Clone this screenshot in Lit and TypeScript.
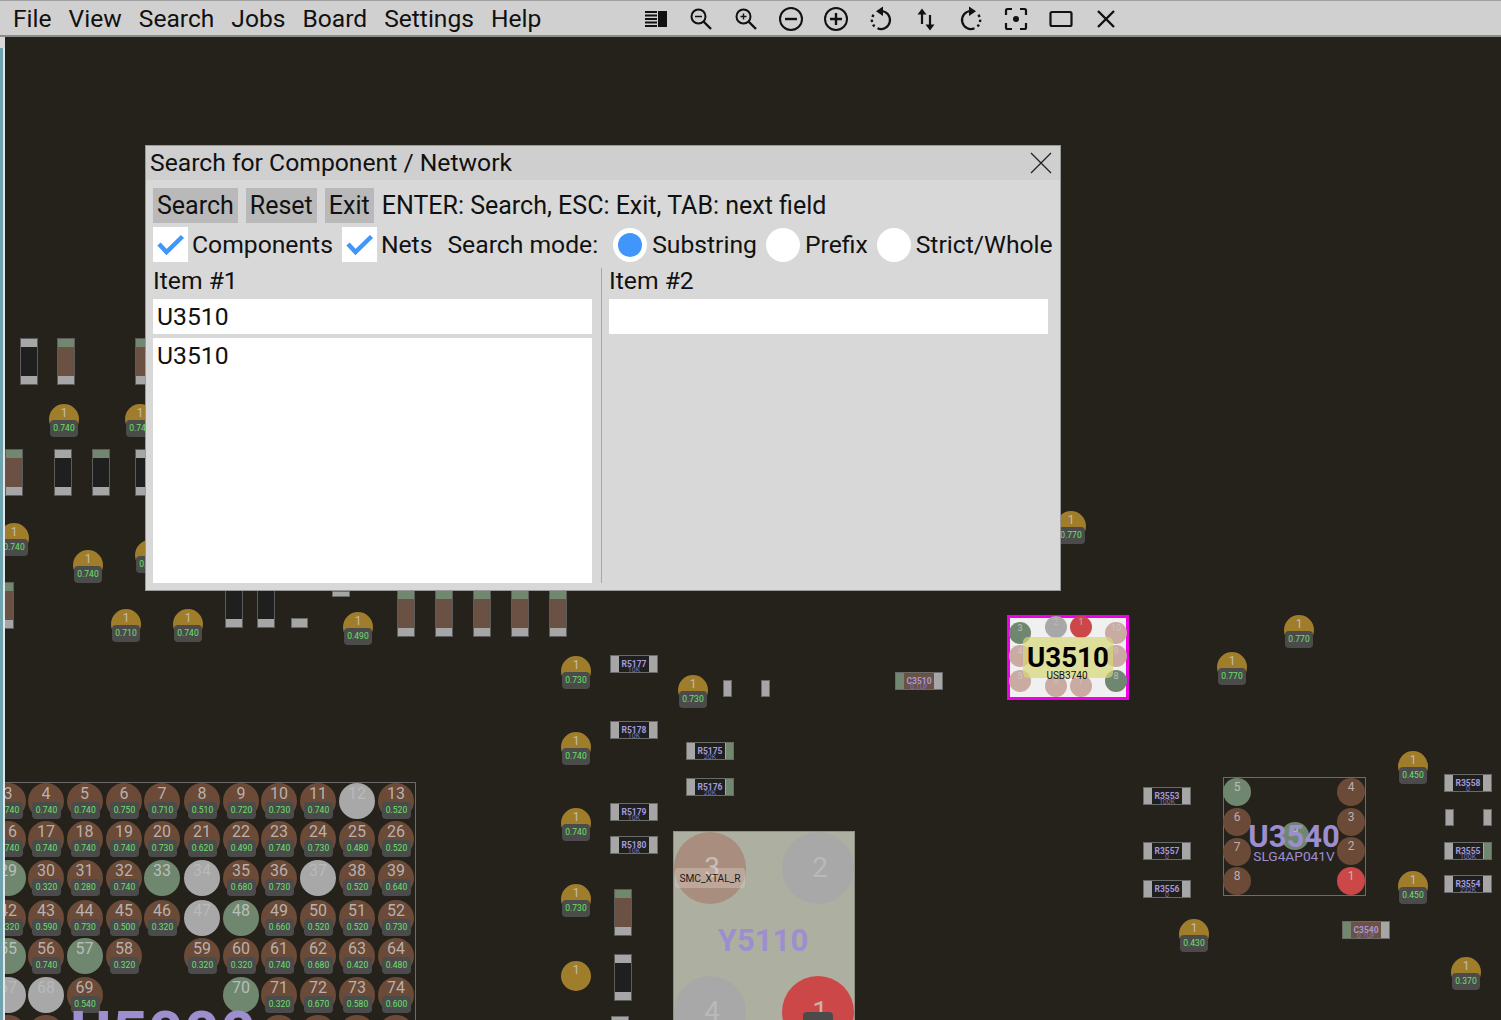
import { LitElement, html, css, svg } from "lit";
import { customElement } from "lit/decorators.js";

const OFFSET_Y = 37; // board starts under the toolbar, data is in page coords

type Tone = "brown" | "green" | "grey" | "red" | "pink" | "tan";

// x, y of the value label, value
const testPoints: [number, number, string][] = [
  [64, 428, "0.740"], [140, 428, "0.740"], [14, 547, "0.740"], [88, 574, "0.740"],
  [150, 564, "0.740"], [126, 633, "0.710"], [188, 633, "0.740"], [358, 636, "0.490"],
  [576, 680, "0.730"], [693, 699, "0.730"], [576, 756, "0.740"], [576, 832, "0.740"],
  [576, 908, "0.730"], [576, 985, ""], [1071, 535, "0.770"], [1299, 639, "0.770"],
  [1232, 676, "0.770"], [1413, 775, "0.450"], [1413, 895, "0.450"], [1194, 943, "0.430"],
  [1466, 981, "0.370"],
];

// x, y, body colour, green cap on top
const vertical: [number, number, "dark" | "brown", boolean][] = [
  [20, 338, "dark", false], [57, 338, "brown", true], [135, 338, "brown", true],
  [5, 449, "brown", true], [54, 449, "dark", false], [92, 449, "dark", true], [135, 449, "dark", false],
  [-4, 582, "brown", true], [225, 581, "dark", false], [257, 581, "dark", false],
  [397, 590, "brown", true], [435, 590, "brown", true], [473, 590, "brown", true],
  [511, 590, "brown", true], [549, 590, "brown", true],
  [614, 889, "brown", true], [614, 954, "dark", false],
];

// x, y, name, value, which cap is green, body colour
const horizontal: [number, number, string, string, "" | "left" | "right", "dark" | "brown"][] = [
  [610, 655, "R5177", "10K", "", "dark"], [610, 721, "R5178", "10K", "", "dark"],
  [610, 803, "R5179", "10K", "", "dark"], [610, 836, "R5180", "10K", "", "dark"],
  [686, 742, "R5175", "20K", "right", "dark"], [686, 778, "R5176", "20K", "right", "dark"],
  [1143, 787, "R3553", "100K", "", "dark"], [1143, 842, "R3557", "0", "", "dark"],
  [1143, 880, "R3556", "0", "", "dark"], [1444, 774, "R3558", "0", "", "dark"],
  [1444, 842, "R3555", "100K", "right", "dark"], [1444, 875, "R3554", "232K", "", "dark"],
  [1342, 921, "C3540", "0.1UF", "left", "brown"], [895, 672, "C3510", "0.1UF", "left", "brown"],
];

// x, y, w, h
const pads: [number, number, number, number][] = [
  [723, 680, 9, 17], [761, 680, 9, 17], [1445, 809, 9, 17], [1483, 809, 9, 17],
  [291, 618, 17, 10], [332, 591, 18, 6], [611, 1016, 18, 6],
];

const bgaCols = [8, 46, 84.5, 124, 162, 202, 241, 279, 318, 357, 396];
const bgaRows = [801, 839, 878, 918, 956, 995, 1033];
// number, value; "g" green, "w" grey, null no pin
const bgaPins: ([number, string] | null)[][] = [
  [[3, ".740"], [4, ".740"], [5, ".740"], [6, ".750"], [7, ".710"], [8, ".510"], [9, ".720"], [10, ".730"], [11, ".740"], [12, "w"], [13, ".520"]],
  [[16, ".740"], [17, ".740"], [18, ".740"], [19, ".740"], [20, ".730"], [21, ".620"], [22, ".490"], [23, ".740"], [24, ".730"], [25, ".480"], [26, ".520"]],
  [[29, "g"], [30, ".320"], [31, ".280"], [32, ".740"], [33, "g"], [34, "w"], [35, ".680"], [36, ".730"], [37, "w"], [38, ".520"], [39, ".640"]],
  [[42, ".320"], [43, ".590"], [44, ".730"], [45, ".500"], [46, ".320"], [47, "w"], [48, "g"], [49, ".660"], [50, ".520"], [51, ".520"], [52, ".730"]],
  [[55, "g"], [56, ".740"], [57, "g"], [58, ".320"], null, [59, ".320"], [60, ".320"], [61, ".740"], [62, ".680"], [63, ".420"], [64, ".480"]],
  [[67, "w"], [68, "w"], [69, ".540"], null, null, null, [70, "g"], [71, ".320"], [72, ".670"], [73, ".580"], [74, ".600"]],
  // only the top of this row is on screen
  [[0, ""], [0, ""], null, null, null, null, null, [0, ""], [0, ""], [0, ""], [0, ""]],
];

const menus = ["File", "View", "Search", "Jobs", "Board", "Settings", "Help"];

const s = (paths: unknown) => html`<svg viewBox="0 0 24 24" width="24" height="24" fill="none" stroke="#111" stroke-width="2">${paths}</svg>`;

const toolIcons = [
  s(svg`<path d="M1 5h12M1 8.500h12M1 12h12M1 15.500h12M1 19h12" stroke-width="2"/><rect x="14" y="4" width="9" height="16" fill="#111" stroke="none"/>`),
  s(svg`<circle cx="9.500" cy="9.500" r="7"/><path d="M14.500 14.500l7.500 7.500" stroke-width="2.400"/><path d="M6 9.500h7" stroke-width="1.500"/>`),
  s(svg`<circle cx="9.500" cy="9.500" r="7"/><path d="M14.500 14.500l7.500 7.500" stroke-width="2.400"/><path d="M6.500 9.500h6M9.500 6.500v6" stroke-width="1.400"/>`),
  s(svg`<circle cx="12" cy="12" r="11"/><path d="M6 12h12" stroke-width="2.400"/>`),
  s(svg`<circle cx="12" cy="12" r="11"/><path d="M6 12h12M12 6v12" stroke-width="2.400"/>`),
  s(svg`<path d="M12 4A9 9 0 1 1 8.500 21.300" stroke-width="2.200"/><path d="M5.500 19.500A9 9 0 0 1 6 6.300" stroke-width="2.400" stroke-dasharray="2.400 2.700"/><path d="M14 -0.500L7 4.300 14 9z" fill="#111" stroke="none"/>`),
  s(svg`<path d="M8 4v13M16 8v13" stroke-width="2.200"/><path d="M3.500 7.500L8 1.500l4.500 6zM11.500 17.500h9L16 23.500z" fill="#111" stroke="none"/>`),
  s(svg`<path d="M12 4A9 9 0 1 0 15.500 21.300" stroke-width="2.200"/><path d="M18.500 19.500A9 9 0 0 0 18 6.300" stroke-width="2.400" stroke-dasharray="2.400 2.700"/><path d="M10 -0.500L17 4.300 10 9z" fill="#111" stroke="none"/>`),
  s(svg`<path d="M2 8V3.500A1.500 1.500 0 0 1 3.500 2H8M16 2h4.500A1.500 1.500 0 0 1 22 3.500V8M22 16v4.500a1.500 1.500 0 0 1-1.500 1.500H16M8 22H3.500A1.500 1.500 0 0 1 2 20.500V16" stroke-width="2.200"/><circle cx="12" cy="12" r="3" fill="#111" stroke="none"/>`),
  s(svg`<rect x="1.500" y="5" width="21" height="14" rx="1.500" stroke-width="2.200"/>`),
  s(svg`<path d="M4 4l16 16M20 4L4 20" stroke-width="2.400"/>`),
];

@customElement("app-root")
export class AppRoot extends LitElement {
  static styles = css`
    :host {
      display: flex;
      flex-direction: column;
      width: 1501px;
      height: 1020px;
      overflow: hidden;
      font-family: Roboto, "Liberation Sans", sans-serif;
      color: #111;
    }

    .toolbar {
      flex: none;
      box-sizing: border-box;
      height: 37px;
      display: flex;
      align-items: center;
      background: #d0d0d0;
      border-top: 1px solid #a0a0a0;
      border-bottom: 2px solid #8c8c8c;
      padding-left: 13px;
    }
    .menus {
      display: flex;
      gap: 17px;
      font-size: 24.600px;
      width: 631px;
    }
    .tools {
      display: flex;
      gap: 21px;
      padding-top: 2px;
    }
    .tools svg {
      display: block;
      overflow: visible;
    }

    .board {
      position: relative;
      flex: 1;
      background: #25221c;
      overflow: hidden;
    }
    .edge {
      position: absolute;
      left: 0;
      top: 11px;
      bottom: 0;
      width: 3px;
      background: #6fa3ad;
      border-right: 2px solid #e2e6e6;
      z-index: 5;
    }
    .edge-top {
      position: absolute;
      left: 0;
      top: 0;
      height: 11px;
      width: 5px;
      background: #d8d8d8;
      z-index: 5;
    }

    /* testpoints */
    .tp {
      position: absolute;
      width: 30px;
      height: 30px;
      margin-left: -15px;
      border-radius: 50%;
      background: #a07d2a;
    }
    .pin-no {
      position: absolute;
      left: 0;
      right: 0;
      text-align: center;
      color: rgba(205, 205, 205, 0.8);
      line-height: 1;
    }
    .tp .pin-no {
      top: 3px;
      font-size: 12px;
    }
    .val {
      position: absolute;
      box-sizing: border-box;
      width: 28px;
      height: 17px;
      border-radius: 4px;
      background: #4b4b4b;
      color: #6be06b;
      font-size: 8.500px;
      line-height: 17px;
      text-align: center;
    }
    .tp .val {
      left: 1px;
      top: 16px;
    }

    /* two pad parts */
    .chip-v,
    .chip-h {
      position: absolute;
      box-sizing: border-box;
      display: flex;
      border: 1px solid #6a6a6a;
      background: #a6a6a6;
    }
    .chip-v {
      width: 18px;
      height: 47px;
      flex-direction: column;
      justify-content: space-between;
      border-color: #5c5c5c;
    }
    .chip-v .body {
      height: 30px;
      margin-top: 8px;
      margin-bottom: 8px;
    }
    .chip-v.top-green {
      background: linear-gradient(#71876f 0 9px, #a6a6a6 9px);
    }
    .chip-h {
      width: 48px;
      height: 18px;
      justify-content: center;
    }
    .chip-h.right {
      background: linear-gradient(90deg, #a6a6a6 0 39px, #71876f 39px);
    }
    .chip-h.left {
      background: linear-gradient(90deg, #71876f 0 9px, #a6a6a6 9px);
    }
    .body.dark {
      background: #1f1f1f;
    }
    .body.brown {
      background: #6b5044;
    }
    .chip-h .body {
      position: relative;
      width: 30px;
      overflow: hidden;
      text-align: center;
    }
    .chip-h .name {
      position: relative;
      z-index: 1;
      display: block;
      color: #a79ad8;
      font-size: 8.500px;
      font-weight: 700;
      line-height: 10px;
      margin-top: 3px;
    }
    .chip-h .rv {
      display: block;
      color: #8175b0;
      font-size: 7px;
      line-height: 8px;
      margin-top: -3px;
    }
    .pad {
      position: absolute;
      background: #a6a6a6;
      border: 1px solid #6a6a6a;
      box-sizing: border-box;
    }

    /* packages */
    .pkg {
      position: absolute;
      box-sizing: border-box;
    }
    .pkg-bga {
      left: -20px;
      width: 436px;
      height: 300px;
      border: 1px solid #6b6b6b;
    }
    .pkg-u3540 {
      width: 143px;
      height: 119px;
      border: 1px solid #6b6b6b;
    }
    .pkg-u3510 {
      width: 122px;
      height: 85px;
      border: 3px solid #f000e8;
      background: #f0f0f0;
    }
    .pkg-y5110 {
      width: 182px;
      height: 230px;
      border: 1px solid #8f8f85;
      background: #adb0a0;
    }
    .pkg-y5110 .pin-no {
      left: 4px;
    }

    .pin {
      position: absolute;
      border-radius: 50%;
    }
    .pin.brown {
      background: #6b4a38;
    }
    .pin.green {
      background: #70876f;
    }
    .pin.grey {
      background: #a8a8a8;
    }
    .pin.red {
      background: #cc4848;
    }
    .pin.pink {
      background: #c9aba2;
    }
    .pin.tan {
      background: #a98d7e;
    }
    .pin.grey .pin-no {
      color: #b9b9b9;
    }
    .pin .val {
      left: 4px;
      top: 19px;
      width: 29px;
    }

    .pkg-label {
      position: absolute;
      white-space: nowrap;
      transform: translate(-50%, -50%);
      color: #9d8fcf;
      line-height: 1;
      text-align: center;
    }
    .bold {
      font-weight: 700;
    }

    .highlight {
      position: absolute;
      left: 1023px;
      top: 600px;
      width: 90px;
      height: 41px;
      border-radius: 5px;
      background: rgba(215, 215, 120, 0.7);
    }
    .xtal-tag {
      position: absolute;
      left: 675px;
      top: 831px;
      width: 70px;
      height: 20px;
      border-radius: 3px;
      background: rgba(225, 215, 205, 0.35);
      color: #1c1c1c;
      font-size: 10.200px;
      line-height: 22px;
      text-align: center;
    }

    /* dialog */
    .dialog {
      position: absolute;
      left: 145px;
      top: 108px;
      z-index: 10;
      box-sizing: border-box;
      width: 916px;
      height: 446px;
      display: flex;
      flex-direction: column;
      background: #d8d8d8;
      border: 1px solid #9a9a9a;
      font-size: 24.700px;
    }
    .title {
      flex: none;
      box-sizing: border-box;
      height: 34px;
      display: flex;
      align-items: center;
      justify-content: space-between;
      padding: 0 8px 0 4px;
      background: #cfcfcf;
    }
    .title > span {
      padding-bottom: 2px;
    }
    .content {
      flex: 1;
      display: flex;
      flex-direction: column;
      padding: 8px 12px 7px 7px;
      min-height: 0;
    }
    .actions,
    .options {
      display: flex;
      align-items: center;
      height: 35px;
      white-space: nowrap;
    }
    .actions {
      font-size: 25px;
    }
    .options {
      margin-top: 4px;
    }
    button {
      font: inherit;
      color: inherit;
      height: 35px;
      border: 0;
      padding: 0 4px;
      margin-right: 8px;
      background: #b9b9b9;
    }
    .tick {
      width: 35px;
      height: 35px;
      flex: none;
      background: #fff;
      margin-right: 4px;
    }
    .tick svg {
      display: block;
    }
    .gap-comp {
      margin-right: 9px;
    }
    .gap-nets {
      margin-right: 15px;
    }
    .gap-mode {
      margin-right: 15px;
    }
    .radio {
      flex: none;
      box-sizing: border-box;
      width: 34px;
      height: 34px;
      border-radius: 50%;
      background: #fff;
      margin-right: 5px;
      display: flex;
      align-items: center;
      justify-content: center;
    }
    .radio.on::after {
      content: "";
      width: 24px;
      height: 24px;
      border-radius: 50%;
      background: #4096fb;
    }
    .gap-radio {
      margin-right: 9px;
    }
    .items {
      flex: 1;
      min-height: 0;
      margin-top: 6px;
      display: grid;
      grid-template-columns: 439px 439px;
      column-gap: 17px;
      position: relative;
    }
    .items::before {
      content: "";
      position: absolute;
      left: 448px;
      top: 0;
      bottom: 0;
      width: 1px;
      background: #a8a8a8;
    }
    .col {
      display: flex;
      flex-direction: column;
      min-height: 0;
    }
    .col-head {
      height: 31px;
      line-height: 26px;
    }
    .field {
      height: 35px;
      line-height: 35px;
      background: #fff;
      padding-left: 4px;
      box-sizing: border-box;
    }
    .results {
      flex: 1;
      margin-top: 4px;
      background: #fff;
      padding-left: 4px;
      line-height: 36px;
    }
  `;

  private pos(x: number, y: number) {
    return `left:${x}px;top:${y - OFFSET_Y}px`;
  }

  private pin(tone: Tone, cx: number, cy: number, r: number, no: string | number, fs: number, noTop: number, value = "") {
    return html`<div
      class="pin ${tone}"
      style="left:${cx - r}px;top:${cy - r}px;width:${r * 2}px;height:${r * 2}px"
    >
      ${no ? html`<span class="pin-no" style="top:${noTop}px;font-size:${fs}px">${no}</span>` : ""}
      ${value ? html`<span class="val">${value}</span>` : ""}
    </div>`;
  }

  private renderBga() {
    // the package has a 1px border, children are placed from inside it
    return bgaPins.map((row, ri) =>
      row.map((p, ci) => {
        if (!p) return "";
        const [no, kind] = p;
        const tone: Tone = kind === "g" ? "green" : kind === "w" ? "grey" : "brown";
        const value = kind.startsWith(".") ? "0" + kind : "";
        return this.pin(tone, bgaCols[ci] + 19, bgaRows[ri] - 783, 18, no, 16, 3, value);
      })
    );
  }

  private renderU3540() {
    const pins: [Tone, number, number, string][] = [
      ["green", 13, 14, "5"], ["brown", 13, 44, "6"], ["brown", 13, 74, "7"], ["brown", 13, 103, "8"],
      ["brown", 127, 14, "4"], ["brown", 127, 44, "3"], ["brown", 127, 73, "2"], ["red", 127, 103, "1"],
      ["green", 71, 58, "9"],
    ];
    return pins.map(([t, x, y, n]) => this.pin(t, x, y, 14, n, 12, 3));
  }

  private renderU3510() {
    const pins: [Tone, number, number, string][] = [
      ["green", 10, 15, "3"], ["grey", 46, 9, "2"], ["red", 71, 9, "1"], ["pink", 106, 15, "10"],
      ["pink", 10, 38, "4"], ["pink", 106, 38, "9"], ["pink", 10, 63, "5"], ["pink", 46, 68, "6"],
      ["pink", 71, 68, "7"], ["green", 106, 63, "8"],
    ];
    return pins.map(([t, x, y, n]) => this.pin(t, x, y, 11, n, 9, 2));
  }

  private renderY5110() {
    return html`
      ${this.pin("tan", 36, 36, 36, "3", 28, 22)}
      ${this.pin("grey", 144, 36, 36, "2", 28, 22)}
      ${this.pin("grey", 36, 180, 36, "4", 28, 22)}
      ${this.pin("red", 144, 180, 36, "1", 28, 22)}
      <div class="val" style="left:129px;top:180px;width:30px;height:40px"></div>
    `;
  }

  render() {
    return html`
      <div class="toolbar">
        <div class="menus">${menus.map((m) => html`<span>${m}</span>`)}</div>
        <div class="tools">${toolIcons}</div>
      </div>
      <div class="board">
        <div class="edge-top"></div>
        <div class="edge"></div>
        ${testPoints.map(
          ([x, y, v]) => html`<div class="tp" style=${this.pos(x, y - 24)}>
            <span class="pin-no">1</span>
            ${v ? html`<span class="val">${v}</span>` : ""}
          </div>`
        )}
        ${vertical.map(
          ([x, y, b, g]) => html`<div class="chip-v ${g ? "top-green" : ""}" style=${this.pos(x, y)}>
            <div class="body ${b}"></div>
          </div>`
        )}
        ${horizontal.map(
          ([x, y, n, v, cap, b]) => html`<div class="chip-h ${cap}" style=${this.pos(x, y)}>
            <div class="body ${b}"><span class="name">${n}</span><span class="rv">${v}</span></div>
          </div>`
        )}
        ${pads.map(
          ([x, y, w, h]) => html`<div class="pad" style="${this.pos(x, y)};width:${w}px;height:${h}px"></div>`
        )}

        <div class="pkg pkg-bga" style="top:${782 - OFFSET_Y}px">${this.renderBga()}</div>
        <div class="pkg-label bold" style="${this.pos(163, 1034)};font-size:63px">U5000</div>

        <div class="pkg pkg-u3540" style=${this.pos(1223, 777)}>${this.renderU3540()}</div>
        <div class="pkg-label bold" style="${this.pos(1294, 836)};font-size:31px">U3540</div>
        <div class="pkg-label" style="${this.pos(1294, 857)};font-size:13.700px">SLG4AP041V</div>

        <div class="pkg pkg-u3510" style=${this.pos(1007, 615)}>
          ${this.renderU3510()}
        </div>
        <div class="highlight"></div>
        <div class="pkg-label bold" style="${this.pos(1068, 658)};font-size:27.700px;color:#000">U3510</div>
        <div class="pkg-label" style="${this.pos(1067, 676)};font-size:10px;color:#111">USB3740</div>

        <div class="pkg pkg-y5110" style=${this.pos(673, 831)}>${this.renderY5110()}</div>
        <div class="pkg-label bold" style="${this.pos(763, 940)};font-size:31px">Y5110</div>
        <div class="xtal-tag">SMC_XTAL_R</div>

        <div class="dialog">
          <div class="title">
            <span>Search for Component / Network</span>
            <svg width="22" height="22" viewBox="0 0 22 22" fill="none" stroke="#222" stroke-width="1.300">
              <path d="M1 1l20 20M21 1L1 21" />
            </svg>
          </div>
          <div class="content">
            <div class="actions">
              <button>Search</button><button>Reset</button><button>Exit</button>
              <span>ENTER: Search, ESC: Exit, TAB: next field</span>
            </div>
            <div class="options">
              <div class="tick">${this.check()}</div><span class="gap-comp">Components</span>
              <div class="tick">${this.check()}</div><span class="gap-nets">Nets</span>
              <span class="gap-mode">Search mode:</span>
              <div class="radio on"></div><span class="gap-radio">Substring</span>
              <div class="radio"></div><span class="gap-radio">Prefix</span>
              <div class="radio"></div><span>Strict/Whole</span>
            </div>
            <div class="items">
              <div class="col">
                <div class="col-head">Item #1</div>
                <div class="field">U3510</div>
                <div class="results">U3510</div>
              </div>
              <div class="col">
                <div class="col-head">Item #2</div>
                <div class="field"></div>
              </div>
            </div>
          </div>
        </div>
      </div>
    `;
  }

  private check() {
    return html`<svg width="35" height="35" viewBox="0 0 35 35" fill="none" stroke="#4096fb" stroke-width="4.500">
      <path d="M6 17l7.500 8 16-15.500" />
    </svg>`;
  }
}
